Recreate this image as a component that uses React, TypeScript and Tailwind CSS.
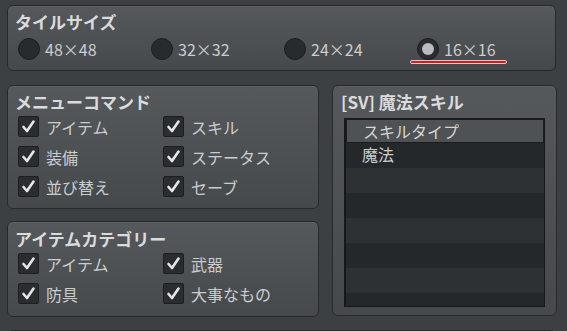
import React from 'react';

const font = { fontFamily: '"Noto Sans CJK JP", "Noto Sans", sans-serif' };

const Panel: React.FC<{ className?: string; children?: React.ReactNode }> = ({ className = '', children }) => (
  <div
    className={`shrink-0 rounded-[6px] border border-[#27292b] bg-gradient-to-b from-[#56595b] to-[#46494b] shadow-[inset_0_1px_0_rgba(255,255,255,0.06)] ${className}`}
  >
    {children}
  </div>
);

const Radio: React.FC<{ label: string; checked?: boolean }> = ({ label, checked }) => (
  <div className="relative flex items-center gap-[5px]">
    <div
      className={`flex h-[22px] w-[22px] items-center justify-center rounded-full border border-[#1b1d1f] ${
        checked ? 'bg-[#2a2d2f]' : 'bg-[#282b2d]'
      }`}
    >
      {checked && <div className="h-[12px] w-[12px] rounded-full bg-[#b9bbbd]" />}
    </div>
    <span className="text-[16px] leading-[20px] text-[#c9cdd0]">{label}</span>
    {checked && (
      <div className="absolute left-[-7px] top-[22px] h-[4px] w-[97px] rounded-full border border-[#d0d0d0] bg-[#e41414]" />
    )}
  </div>
);

const Check: React.FC<{ label: string }> = ({ label }) => (
  <div className="flex items-center gap-[7px]">
    <div className="flex h-[21px] w-[21px] items-center justify-center rounded-[2px] border border-[#1c1e20] bg-[#2a2d2f]">
      <svg width="15" height="15" viewBox="0 0 15 15">
        <path d="M2.5 8 L6 12 L12.5 2.5" fill="none" stroke="#e4e6e8" strokeWidth="2.6" strokeLinecap="round" strokeLinejoin="round" />
      </svg>
    </div>
    <span className="text-[16px] leading-[20px] text-[#c9cdd0]">{label}</span>
  </div>
);

const Title: React.FC<{ children: React.ReactNode }> = ({ children }) => (
  <div className="text-[17px] font-bold leading-[22px] text-[#d9dbdd]">{children}</div>
);

const CheckGrid: React.FC<{ items: string[] }> = ({ items }) => (
  <div className="mt-[3px] grid grid-cols-[145px_1fr] gap-y-[9px] pl-[3px]">
    {items.map((it) => (
      <Check key={it} label={it} />
    ))}
  </div>
);

export default function App() {
  const rows = ['魔法', '', '', '', '', '', ''];
  return (
    <div className="flex h-[331px] w-[567px] flex-col overflow-hidden bg-[#3d4042] pl-[7px] pt-[5px]" style={font}>
      <Panel className="h-[66px] w-[549px] px-[7px] pt-[5px]">
        <Title>タイルサイズ</Title>
        <div className="mt-[5px] grid grid-cols-[133px_133px_133px_1fr] pl-[3px]">
          <Radio label="48×48" />
          <Radio label="32×32" />
          <Radio label="24×24" />
          <Radio label="16×16" checked />
        </div>
      </Panel>

      <div className="mt-[14px] flex shrink-0 gap-[13px]">
        <div className="flex w-[312px] flex-col gap-[12px]">
          <Panel className="h-[124px] px-[7px] pt-[5px]">
            <Title>メニューコマンド</Title>
            <CheckGrid items={['アイテム', 'スキル', '装備', 'ステータス', '並び替え', 'セーブ']} />
          </Panel>
          <Panel className="h-[96px] px-[7px] pt-[6px]">
            <Title>アイテムカテゴリー</Title>
            <CheckGrid items={['アイテム', '武器', '防具', '大事なもの']} />
          </Panel>
        </div>

        <Panel className="h-[231px] w-[225px] px-[8px] pt-[5px]">
          <Title>[SV] 魔法スキル</Title>
          <div className="mt-[5px] ml-[3px] h-[189px] w-[201px] overflow-hidden border border-[#16181a] border-l-[2px] bg-[#26292b]">
            <div className="h-[24px] border border-[#1a1c1e] bg-[#4e5254] pl-[16px] text-[16px] leading-[22px] text-[#d3d6d8]">
              スキルタイプ
            </div>
            {rows.map((r, i) => (
              <div
                key={i}
                className={`h-[25px] pl-[16px] text-[16px] leading-[23px] text-[#c9cdd0] ${
                  i % 2 === 0 ? 'bg-[#25282a]' : 'bg-[#2d3133]'
                }`}
              >
                {r}
              </div>
            ))}
          </div>
        </Panel>
      </div>

      <div className="mt-[13px] h-[20px] w-[549px] shrink-0 rounded-[6px] border border-[#27292b] bg-[#44474a]" />
    </div>
  );
}
